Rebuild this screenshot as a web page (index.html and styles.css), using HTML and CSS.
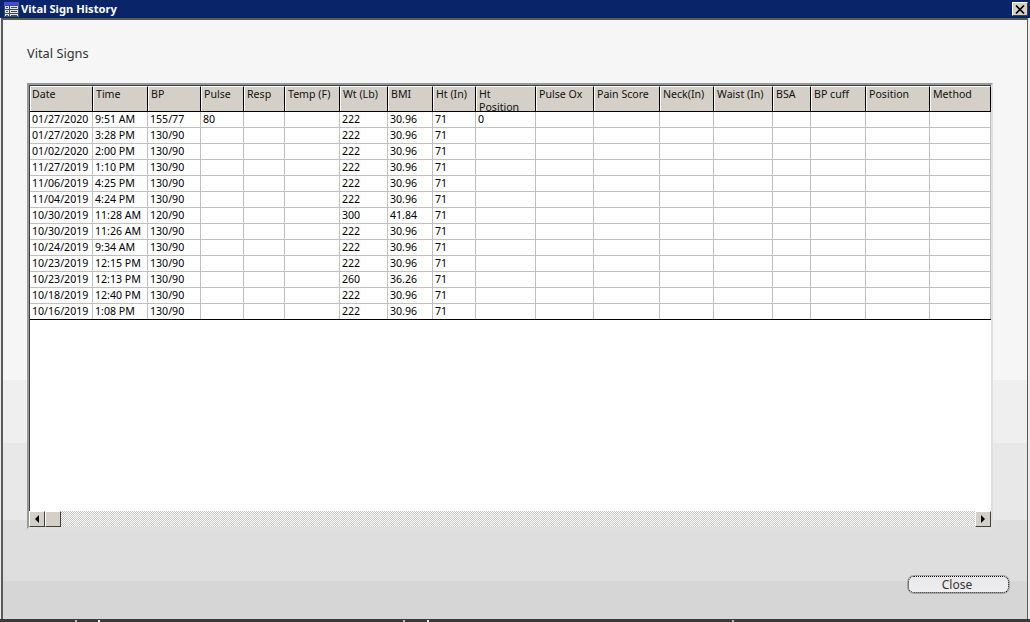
FILE: index.html
```html
<!DOCTYPE html>
<html lang="en">
<head>
<meta charset="utf-8">
<title>Vital Sign History</title>
<link rel="stylesheet" href="styles.css">
</head>
<body>
<div class="window">
  <header class="titlebar">
    <svg class="app-icon" width="15" height="15" viewBox="0 0 15 15"><rect x="0" y="0" width="15" height="3" fill="#4a4adf"/><rect x="0" y="3" width="15" height="12" fill="#dfe3ea"/><path d="M0.5 3.5h14v11h-14zM5.5 3.5v11M0.5 7.5h14M0.5 11.5h14" fill="none" stroke="#3c4a66"/><path d="M2 5.5h2M2 9.5h2M2 13.5h2M7 5.5h6M7 9.5h6M7 13.5h6" stroke="#3c4a66"/></svg>
    <span class="title">Vital Sign History</span>
    <button class="x-btn"><svg width="10" height="9" viewBox="0 0 10 9"><path d="M1 0.5l8 8M9 0.5l-8 8" stroke="#000" stroke-width="1.6"/></svg></button>
  </header>
  <main class="client">
    <h1 class="heading">Vital Signs</h1>
    <div class="grid-frame">
      <div class="grid-view">
        <div class="row head">
          <div>Date</div><div>Time</div><div>BP</div><div>Pulse</div><div>Resp</div><div>Temp (F)</div><div>Wt (Lb)</div><div>BMI</div><div>Ht (In)</div><div>Ht<br>Position</div><div>Pulse Ox</div><div>Pain Score</div><div>Neck(In)</div><div>Waist (In)</div><div>BSA</div><div>BP cuff</div><div>Position</div><div>Method</div>
        </div>
        <div class="row"><div>01/27/2020</div><div>9:51 AM</div><div>155/77</div><div>80</div><div></div><div></div><div>222</div><div>30.96</div><div>71</div><div>0</div><div></div><div></div><div></div><div></div><div></div><div></div><div></div><div></div></div>
        <div class="row"><div>01/27/2020</div><div>3:28 PM</div><div>130/90</div><div></div><div></div><div></div><div>222</div><div>30.96</div><div>71</div><div></div><div></div><div></div><div></div><div></div><div></div><div></div><div></div><div></div></div>
        <div class="row"><div>01/02/2020</div><div>2:00 PM</div><div>130/90</div><div></div><div></div><div></div><div>222</div><div>30.96</div><div>71</div><div></div><div></div><div></div><div></div><div></div><div></div><div></div><div></div><div></div></div>
        <div class="row"><div>11/27/2019</div><div>1:10 PM</div><div>130/90</div><div></div><div></div><div></div><div>222</div><div>30.96</div><div>71</div><div></div><div></div><div></div><div></div><div></div><div></div><div></div><div></div><div></div></div>
        <div class="row"><div>11/06/2019</div><div>4:25 PM</div><div>130/90</div><div></div><div></div><div></div><div>222</div><div>30.96</div><div>71</div><div></div><div></div><div></div><div></div><div></div><div></div><div></div><div></div><div></div></div>
        <div class="row"><div>11/04/2019</div><div>4:24 PM</div><div>130/90</div><div></div><div></div><div></div><div>222</div><div>30.96</div><div>71</div><div></div><div></div><div></div><div></div><div></div><div></div><div></div><div></div><div></div></div>
        <div class="row"><div>10/30/2019</div><div>11:28 AM</div><div>120/90</div><div></div><div></div><div></div><div>300</div><div>41.84</div><div>71</div><div></div><div></div><div></div><div></div><div></div><div></div><div></div><div></div><div></div></div>
        <div class="row"><div>10/30/2019</div><div>11:26 AM</div><div>130/90</div><div></div><div></div><div></div><div>222</div><div>30.96</div><div>71</div><div></div><div></div><div></div><div></div><div></div><div></div><div></div><div></div><div></div></div>
        <div class="row"><div>10/24/2019</div><div>9:34 AM</div><div>130/90</div><div></div><div></div><div></div><div>222</div><div>30.96</div><div>71</div><div></div><div></div><div></div><div></div><div></div><div></div><div></div><div></div><div></div></div>
        <div class="row"><div>10/23/2019</div><div>12:15 PM</div><div>130/90</div><div></div><div></div><div></div><div>222</div><div>30.96</div><div>71</div><div></div><div></div><div></div><div></div><div></div><div></div><div></div><div></div><div></div></div>
        <div class="row"><div>10/23/2019</div><div>12:13 PM</div><div>130/90</div><div></div><div></div><div></div><div>260</div><div>36.26</div><div>71</div><div></div><div></div><div></div><div></div><div></div><div></div><div></div><div></div><div></div></div>
        <div class="row"><div>10/18/2019</div><div>12:40 PM</div><div>130/90</div><div></div><div></div><div></div><div>222</div><div>30.96</div><div>71</div><div></div><div></div><div></div><div></div><div></div><div></div><div></div><div></div><div></div></div>
        <div class="row last"><div>10/16/2019</div><div>1:08 PM</div><div>130/90</div><div></div><div></div><div></div><div>222</div><div>30.96</div><div>71</div><div></div><div></div><div></div><div></div><div></div><div></div><div></div><div></div><div></div></div>
      </div>
      <div class="scrollbar">
        <div class="sb-btn"><span class="arrow left"></span></div>
        <div class="sb-btn thumb"></div>
        <div class="sb-track"></div>
        <div class="sb-btn"><span class="arrow right"></span></div>
      </div>
    </div>
    <div class="actions"><button class="close-btn">Close</button></div>
  </main>
</div>
<div class="under-strip"></div>
</body>
</html>
```
FILE: styles.css
```css
* { box-sizing: border-box; }
html, body { margin: 0; padding: 0; height: 622px; overflow: hidden; }
body { background: #3a3a3a; font-family: "Noto Sans", "DejaVu Sans", sans-serif; font-size: 10.6px; color: #000; }
.window { height: 619px; display: flex; flex-direction: column; background: #ecece8; padding: 0 2px 0 1px; }
.titlebar { height: 18px; flex: none; background: #0a246a; display: flex; align-items: center; margin: 0 -2px 0 -1px; padding: 0 2px 0 4px; color: #fff; }
.app-icon { flex: none; margin-right: 2px; }
.title { font-weight: 700; font-size: 11.2px; flex: 1; padding-bottom: 1px; }
.x-btn { width: 16px; height: 14px; padding: 0; background: #d4d0c8; border: 1px solid; border-color: #fff #404040 #404040 #fff; display: flex; align-items: center; justify-content: center; }
.client { flex: 1; border-left: 2px solid #5a5a5a; border-top: 2px solid #5a5a5a; border-right: 1px solid #5a5a5a; background: linear-gradient(#f6f6f6 0, #f6f6f6 360px, #efefef 360px, #efefef 423px, #e8e8e8 423px, #e8e8e8 500px, #dedede 500px, #dedede 561px, #d6d6d6 561px); padding: 25px 0 0 24px; display: flex; flex-direction: column; }
.heading { margin: 0; font-size: 12.8px; font-weight: 400; color: #333; line-height: 16px; height: 38px; flex: none; }
.grid-frame { width: 966px; height: 446px; flex: none; border: 2px solid; border-color: #999 #e0e0dc #e0e0dc #999; display: flex; flex-direction: column; background: #fff; padding: 1px 0 0 1px; box-shadow: inset 1px 1px 0 #404040; }
.grid-view { flex: 1; overflow: hidden; }
.row { display: grid; grid-template-columns: 63px 55px 53px 43px 41px 55px 48px 45px 43px 60px 58px 66px 54px 59px 38px 55px 64px 61px; height: 16px; line-height: 15px; border-bottom: 1px solid #c0c0c0; }
.row > div { border-right: 1px solid #c0c0c0; padding-left: 2px; white-space: nowrap; overflow: hidden; }
.row.last { border-bottom-color: #000; }
.row.head { height: 26px; background: #d4d0c8; border-bottom: 1px solid #000; line-height: 13px; }
.row.head > div { border-right: 1px solid #000; border-left: 1px solid #fff; border-top: 1px solid #fff; padding: 1px 0 0 2px; color: #111; }
.row.head > div:first-child { padding-left: 1px; }
.scrollbar { height: 16px; flex: none; display: flex; margin-left: -1px; background-color: #eee; background-image: repeating-conic-gradient(#c8c8c4 0 25%, #fff 0 50%); background-size: 2px 2px; }
.sb-btn { width: 16px; height: 16px; background: #d4d0c8; border: 1px solid; border-color: #fff #404040 #404040 #fff; display: flex; align-items: center; justify-content: center; }
.sb-track { flex: 1; }
.arrow { width: 0; height: 0; border: 4px solid transparent; }
.arrow.left { border-right-color: #000; border-left-width: 0; }
.arrow.right { border-left-color: #000; border-right-width: 0; }
.actions { display: flex; justify-content: flex-end; padding: 47px 18px 0 0; }
.close-btn { width: 101px; height: 17px; padding: 0 3px 0 0; border-radius: 6px; border: 1px dotted #000; background: linear-gradient(#e8e8ea, #efedf0); color: #333; font: 12px "Noto Sans", sans-serif; line-height: 14px; box-shadow: 0 0 0 1px #a5a5a5; }
.under-strip { height: 3px; background-color: #3a3a3a; background-image: linear-gradient(#bbb, #bbb), linear-gradient(#eee, #eee), linear-gradient(#bbb, #bbb), linear-gradient(#eee, #eee), linear-gradient(#bbb, #bbb); background-repeat: no-repeat; background-size: 2px 2px; background-position: 75px 1px, 98px 1px, 403px 1px, 427px 1px, 732px 1px; }
```
